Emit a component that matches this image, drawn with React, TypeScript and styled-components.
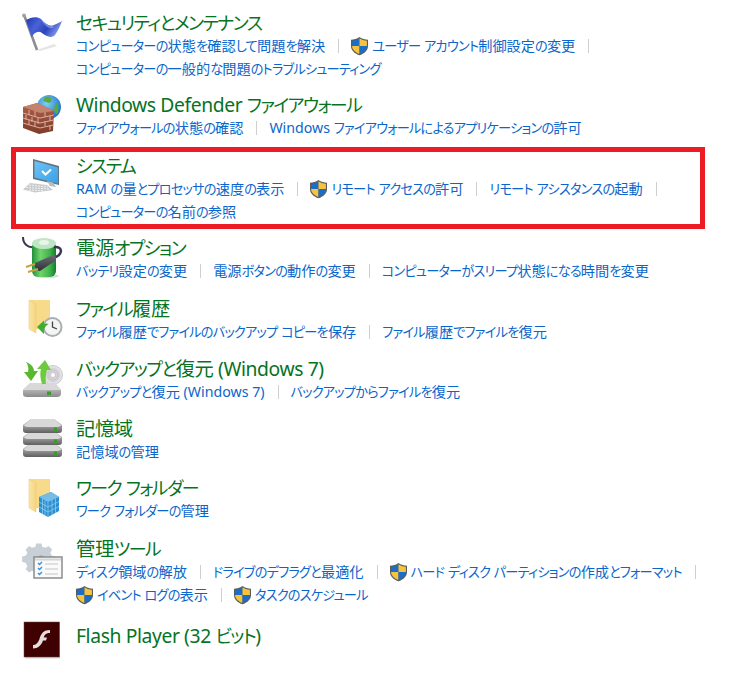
import React from "react";
import styled, { createGlobalStyle } from "styled-components";

const Global = createGlobalStyle`
  html, body { margin: 0; padding: 0; background: #fff; }
  body { font-family: "Noto Sans", "Noto Sans CJK JP", sans-serif; }
`;

const Page = styled.main`
  width: 750px;
  height: 695px;
  overflow: hidden;
  box-sizing: border-box;
  padding: 11px 45px 0 20px;
  display: flex;
  flex-direction: column;
`;

const Row = styled.section<{ $after: number; $highlight?: boolean }>`
  position: relative;
  display: flex;
  gap: 12px;
  margin-bottom: ${(p) => p.$after}px;
  ${(p) =>
    p.$highlight
      ? `&::after {
          content: "";
          position: absolute;
          left: -9px; right: 0; top: -7px; bottom: -6px;
          border: 5px solid #ed1c24;
          pointer-events: none;
        }`
      : ""}
`;

const IconBox = styled.svg`
  width: 44px;
  height: 44px;
  flex: none;
  display: block;
`;

const Body = styled.div`
  flex: 1;
  min-width: 0;
`;

const Title = styled.h2<{ $drop?: number }>`
  --kana-track: -0.085em;
  --latin-track: -0.02em;
  margin: ${(p) => p.$drop ?? 0}px 0 0;
  font-weight: 400;
  font-size: 19.3px;
  line-height: 24px;
  color: #05731f;
  font-feature-settings: "palt";
  white-space: nowrap;
`;

const Links = styled.div`
  display: flex;
  flex-wrap: wrap;
  align-items: center;
  margin: -1px -8px 0 0;
`;

const Item = styled.a`
  --kana-track: -0.06em;
  --latin-track: 0;
  display: inline-flex;
  align-items: center;
  height: 23px;
  font-size: 14.2px;
  line-height: 23px;
  color: #0a66cc;
  white-space: pre;
  font-feature-settings: "palt";
  &:not(:last-child)::after {
    content: "";
    width: 1px;
    height: 14px;
    margin: 0 12px 0 13px;
    background: #cfcfcf;
  }
`;

const Kana = styled.span`
  font-size: 0.93em;
  letter-spacing: var(--kana-track);
`;

const Latin = styled.span`
  letter-spacing: var(--latin-track);
`;

function Styled({ text }: { text: string }) {
  const parts = text.split(/([\u3040-\u30ff]+)/).filter(Boolean);
  return (
    <span>
      {parts.map((p, i) => (/[\u3040-\u30ff]/.test(p) ? <Kana key={i}>{p}</Kana> : <Latin key={i}>{p}</Latin>))}
    </span>
  );
}

const ShieldSvg = styled.svg`
  width: 19px;
  height: 20px;
  flex: none;
  margin: 0 3px 0 -1px;
`;

function Shield() {
  return (
    <ShieldSvg viewBox="0 0 19 20">
      <path d="M9.5 1 C7 3 4 3.6 1 3.8 V10 C1 14.5 5 17.8 9.5 19.3 C14 17.8 18 14.5 18 10 V3.8 C15 3.6 12 3 9.5 1Z" fill="#5b5b5b" />
      <path d="M9.5 2.3 V10 H2.1 V4.8 C5 4.6 7.4 3.9 9.5 2.3Z" fill="#1a6ec9" />
      <path d="M9.5 2.3 V10 H16.9 V4.8 C14 4.6 11.6 3.9 9.5 2.3Z" fill="#f6c33c" />
      <path d="M2.1 10 H9.5 V18 C5.6 16.6 2.1 13.8 2.1 10Z" fill="#f6c33c" />
      <path d="M16.9 10 H9.5 V18 C13.4 16.6 16.9 13.8 16.9 10Z" fill="#1a6ec9" />
    </ShieldSvg>
  );
}

const FlagIcon = () => (
  <IconBox viewBox="0 0 44 44">
    <defs>
      <linearGradient id="fl" x1="0" y1="0" x2="1" y2="0.4">
        <stop offset="0" stopColor="#1f35b0" />
        <stop offset=".4" stopColor="#4a63d8" />
        <stop offset=".7" stopColor="#2b43bb" />
        <stop offset="1" stopColor="#7d93e6" />
      </linearGradient>
    </defs>
    <path d="M17 39 L34 33 L37 35 L20 40Z" fill="#d9d9d9" opacity=".7" />
    <path d="M4.5 5 L17 39" stroke="#8e8e8e" strokeWidth="2.6" />
    <circle cx="4" cy="4.5" r="1.9" fill="#a0a0a0" />
    <path d="M6 9 C11 6 17 5 21 8 C25 13 30 16 34 14 C37 13 40 11 42 10 C40 15 38 20 35 24 C31 28 26 25 22 22 C18 19 14 22 11.5 26Z" fill="url(#fl)" />
    <path d="M21 8 C25 13 30 16 34 14 L33 17 C28 18 24 14 21 8Z" fill="#8fa3ee" opacity=".7" />
  </IconBox>
);

const WallIcon = () => (
  <IconBox viewBox="0 0 44 44">
    <defs>
      <radialGradient id="gl" cx=".4" cy=".35" r=".7">
        <stop offset="0" stopColor="#7fd0f5" />
        <stop offset="1" stopColor="#1c6fc4" />
      </radialGradient>
      <linearGradient id="wl" x1="0" y1="0" x2="0" y2="1">
        <stop offset="0" stopColor="#b2604a" />
        <stop offset="1" stopColor="#7e3b2a" />
      </linearGradient>
    </defs>
    <circle cx="29" cy="14" r="12" fill="url(#gl)" />
    <path d="M25 4 C30 3 33 6 31 9 C28 11 25 8 23 8Z M36 10 C39 13 39 19 37 21 C34 20 33 15 36 10Z" fill="#5bab3a" />
    <path d="M3 14 L17 10 L34 18 L33 38 L19 41 L3 35Z" fill="url(#wl)" />
    <path d="M3 14 L17 10 L34 18 L20 20Z" fill="#c5826c" />
    <g stroke="#d9b0a0" strokeWidth="1" fill="none">
      <path d="M3 20 L20 25 L33.7 22 M3 25 L20 30 L33.5 27 M3 30 L20 35 L33.2 32" />
      <path d="M9 17 V22 M15 18 V24 M6 22 V27 M12 24 V29 M18 25 V31 M9 27 V32 M15 29 V34 M25 19 V24 M30 23 V28 M25 28 V33 M30 32 V37" />
    </g>
  </IconBox>
);

const SystemIcon = () => (
  <IconBox viewBox="0 0 44 44">
    <defs>
      <linearGradient id="sc" x1="0" y1="0" x2="1" y2="1">
        <stop offset="0" stopColor="#6cc4f7" />
        <stop offset="1" stopColor="#3a9fe8" />
      </linearGradient>
    </defs>
    <path d="M13 5 L39 12 V31 L13 25Z" fill="#66747f" />
    <path d="M14.5 7 L38 13.5 V29.5 L14.5 23.5Z" fill="url(#sc)" />
    <path d="M22 17 L25.5 20.5 L31 15.5" stroke="#fff" strokeWidth="2" fill="none" />
    <path d="M27 27 L33 28.5 L36 33 L30 32Z" fill="#b4bcc2" />
    <path d="M10 29 L27 31 L33 36 L15 38.5 L3 35.5Z" fill="#c8cccf" />
    <path d="M9 31 L28 33 M6 33.5 L30 35 M9 36 L24 36.8" stroke="#f2f2f2" strokeWidth="1" fill="none" strokeDasharray="2 1" />
  </IconBox>
);

const PowerIcon = () => (
  <IconBox viewBox="0 0 44 44">
    <defs>
      <linearGradient id="bt" x1="0" y1="0" x2="1" y2="0">
        <stop offset="0" stopColor="#1f8f3a" />
        <stop offset=".35" stopColor="#6fd46a" />
        <stop offset=".75" stopColor="#3fb24a" />
        <stop offset="1" stopColor="#167a30" />
      </linearGradient>
      <linearGradient id="pg" x1="0" y1="0" x2="0" y2="1">
        <stop offset="0" stopColor="#6b6f75" />
        <stop offset="1" stopColor="#2d3036" />
      </linearGradient>
    </defs>
    <ellipse cx="27" cy="40" rx="12" ry="2" fill="#ccc" opacity=".7" />
    <path d="M3 1 C3 8 8 12 14 11" stroke="#3a3550" strokeWidth="2" fill="none" />
    <rect x="12" y="5" width="24" height="36" rx="6" fill="url(#bt)" />
    <ellipse cx="24" cy="7.5" rx="12" ry="5.5" fill="#bfe6c4" />
    <ellipse cx="24" cy="6.5" rx="5" ry="2.5" fill="#e8f6ea" />
    <path d="M32 22 C43 20 44 10 34 11" stroke="#3a3550" strokeWidth="2.5" fill="none" />
    <path d="M15 27 L33 19 C36 19 37 23 35 25 L20 35 C16 35 14 31 15 27Z" fill="url(#pg)" />
    <path d="M15 28 L6 31 M18 33 L8 36" stroke="#c9a245" strokeWidth="2" />
  </IconBox>
);

const FolderBase = ({ id }: { id: string }) => (
  <g>
    <defs>
      <linearGradient id={id} x1="0" y1="0" x2="1" y2="0">
        <stop offset="0" stopColor="#fbe6a6" />
        <stop offset="1" stopColor="#f5d57f" />
      </linearGradient>
    </defs>
    <rect x="9" y="3" width="21" height="29" fill="#f7da8a" />
    <path d="M9 3 L16 7 V36 L9 32Z" fill={`url(#${id})`} stroke="#ecc66c" strokeWidth=".5" />
  </g>
);

const HistoryIcon = () => (
  <IconBox viewBox="0 0 44 44">
    <FolderBase id="fh" />
    <circle cx="32.5" cy="30" r="10" fill="#a9adb0" />
    <circle cx="32.5" cy="30" r="8" fill="#f4f4f4" />
    <path d="M32.5 24.5 V30 L37 32" stroke="#444" strokeWidth="1.3" fill="none" />
    <path d="M17 30 L24 23.5 V27 C26 26 27.5 26.5 28.5 27 C26 28.5 24.5 30 24 33 L24 37Z" fill="#3fae2a" />
  </IconBox>
);

const BackupIcon = () => (
  <IconBox viewBox="0 0 44 44">
    <defs>
      <linearGradient id="dr" x1="0" y1="0" x2="0" y2="1">
        <stop offset="0" stopColor="#dcdcdc" />
        <stop offset="1" stopColor="#8a8a8a" />
      </linearGradient>
      <radialGradient id="dc">
        <stop offset="0" stopColor="#fff" />
        <stop offset=".5" stopColor="#c9c6cf" />
        <stop offset="1" stopColor="#eee" />
      </radialGradient>
    </defs>
    <circle cx="33" cy="18" r="9.5" fill="url(#dc)" stroke="#aaa" strokeWidth=".6" />
    <circle cx="33" cy="18" r="2.5" fill="#fff" stroke="#999" strokeWidth=".5" />
    <path d="M10 26 L35 26 L41 33 V37 C41 39 39 40 37 40 H7 C4 40 3 39 3 37 V33Z" fill="url(#dr)" />
    <path d="M10 26 L35 26 L41 33 H3Z" fill="#d8d8d8" />
    <rect x="27" y="34.5" width="4" height="3.5" fill="#3c9a2c" />
    <path d="M6 5 C11 7 14 10 14 14 L18 14 L11 24 L4 15 L8 15 C9 11 8 8 6 5Z" fill="#58b92f" />
    <path d="M22 27 C20 20 20 15 21 12 L17 12 L25 3 L31 13 L27 13 C26 17 25 22 26 27Z" fill="#6ecb3e" />
  </IconBox>
);

const Disk = ({ y, id }: { y: number; id: string }) => (
  <g transform={`translate(0 ${y})`}>
    <path d="M3 8 L11 2 H34 L42 8 V13 C42 15 41 16 39 16 H6 C4 16 3 15 3 13Z" fill={`url(#${id})`} />
    <path d="M3.5 8.5 L11 2 H34 L41.5 8.5 L38 10 H7Z" fill="#d8d8d8" />
    <rect x="34" y="10.5" width="3" height="4" fill="#3c9a2c" />
  </g>
);

const StorageIcon = () => (
  <IconBox viewBox="0 0 44 44">
    <defs>
      <linearGradient id="sd" x1="0" y1="0" x2="0" y2="1">
        <stop offset="0.4" stopColor="#a8a8a8" />
        <stop offset="1" stopColor="#5f5f5f" />
      </linearGradient>
    </defs>
    <Disk y={24} id="sd" />
    <Disk y={12} id="sd" />
    <Disk y={0} id="sd" />
  </IconBox>
);

const WorkIcon = () => (
  <IconBox viewBox="0 0 44 44">
    <FolderBase id="fw" />
    <path d="M19 21 L31 16 L39 21 V35 L28 41 L19 36Z" fill="#2d8fd0" />
    <path d="M19 21 L31 16 L39 21 L28 26Z" fill="#73bde8" />
    <path d="M19 26 L28 31 L39 25.5 M19 31 L28 36 L39 30.5 M28 26 V41 M22.5 23 V38 M25 24.5 V39 M32 24 V39 M35.5 22.5 V37" stroke="#8ccbef" strokeWidth=".8" fill="none" />
  </IconBox>
);

const AdminIcon = () => (
  <IconBox viewBox="0 0 44 44">
    <path
      d="M15 5 H21 L22 9 L26 10 L29 8 L33 12 L31 16 L33 19 L37 20 V26 L33 27 L31 31 L33 34 L29 38 L26 36 L22 37 L21 41 H15 L14 37 L10 36 L7 38 L3 34 L5 31 L3 27 L-1 26 V20 L3 19 L5 16 L3 12 L7 8 L10 10 L14 9Z"
      fill="#c9cfd6"
      transform="translate(3 2) scale(.88)"
    />
    <circle cx="21" cy="24" r="5.5" fill="#8f9499" />
    <rect x="14" y="20" width="28" height="21" fill="#fafafa" stroke="#8c8c8c" strokeWidth="1.5" />
    <path d="M15 22.5 H41" stroke="#d5d5d5" strokeWidth="2" />
    <path d="M18 26 L19.5 27.5 L22 25 M18 31 L19.5 32.5 L22 30 M18 36 L19.5 37.5 L22 35" stroke="#3a8fe0" strokeWidth="1.4" fill="none" />
    <path d="M25 27 H38 M25 32 H38 M25 37 H38" stroke="#c4c4c4" strokeWidth="1" />
  </IconBox>
);

const FlashIcon = () => (
  <IconBox viewBox="0 0 44 44">
    <rect x="5" y="2" width="35" height="35.5" fill="#bbb" opacity=".6" />
    <rect x="4" y="1" width="35.5" height="35" fill="#3e0000" stroke="#5f4a4a" strokeWidth=".5" />
    <path d="M30 9 V12 C26 12 24.5 13.5 23.8 16.5 H27 L26 19.5 H23 C21.5 24 18 27.5 13 27.5 V24 C16 24 18 22 19.3 18.5 C21 12 24 9 30 9Z" fill="#e6dcdc" />
  </IconBox>
);

type LinkData = { text: string; shield?: boolean };
type RowData = {
  title: string;
  icon: React.ComponentType;
  links: LinkData[];
  after: number;
  highlight?: boolean;
  drop?: number;
};

const rows: RowData[] = [
  {
    title: "セキュリティとメンテナンス",
    icon: FlagIcon,
    after: 13,
    links: [
      { text: "コンピューターの状態を確認して問題を解決" },
      { text: "ユーザー アカウント制御設定の変更", shield: true },
      { text: "コンピューターの一般的な問題のトラブルシューティング" },
    ],
  },
  {
    title: "Windows Defender ファイアウォール",
    icon: WallIcon,
    after: 15,
    links: [{ text: "ファイアウォールの状態の確認" }, { text: "Windows ファイアウォールによるアプリケーションの許可" }],
  },
  {
    title: "システム",
    icon: SystemIcon,
    after: 13,
    highlight: true,
    links: [
      { text: "RAM の量とプロセッサの速度の表示" },
      { text: "リモート アクセスの許可", shield: true },
      { text: "リモート アシスタンスの起動" },
      { text: "コンピューターの名前の参照" },
    ],
  },
  {
    title: "電源オプション",
    icon: PowerIcon,
    after: 15,
    links: [{ text: "バッテリ設定の変更" }, { text: "電源ボタンの動作の変更" }, { text: "コンピューターがスリープ状態になる時間を変更" }],
  },
  {
    title: "ファイル履歴",
    icon: HistoryIcon,
    after: 14,
    links: [{ text: "ファイル履歴でファイルのバックアップ コピーを保存" }, { text: "ファイル履歴でファイルを復元" }],
  },
  {
    title: "バックアップと復元 (Windows 7)",
    icon: BackupIcon,
    after: 14,
    links: [{ text: "バックアップと復元 (Windows 7)" }, { text: "バックアップからファイルを復元" }],
  },
  { title: "記憶域", icon: StorageIcon, after: 13, links: [{ text: "記憶域の管理" }] },
  { title: "ワーク フォルダー", icon: WorkIcon, after: 15, links: [{ text: "ワーク フォルダーの管理" }] },
  {
    title: "管理ツール",
    icon: AdminIcon,
    after: 15,
    links: [
      { text: "ディスク領域の解放" },
      { text: "ドライブのデフラグと最適化" },
      { text: "ハード ディスク パーティションの作成とフォーマット", shield: true },
      { text: "イベント ログの表示", shield: true },
      { text: "タスクのスケジュール", shield: true },
    ],
  },
  { title: "Flash Player (32 ビット)", icon: FlashIcon, after: 0, drop: 3, links: [] },
];

export default function App() {
  return (
    <Page>
      <Global />
      {rows.map((r) => {
        const Icon = r.icon;
        return (
          <Row key={r.title} $after={r.after} $highlight={r.highlight}>
            <Icon />
            <Body>
              <Title $drop={r.drop}>
                <Styled text={r.title} />
              </Title>
              {r.links.length > 0 && (
                <Links>
                  {r.links.map((l) => (
                    <Item key={l.text}>
                      {l.shield && <Shield />}
                      <Styled text={l.text} />
                    </Item>
                  ))}
                </Links>
              )}
            </Body>
          </Row>
        );
      })}
    </Page>
  );
}
